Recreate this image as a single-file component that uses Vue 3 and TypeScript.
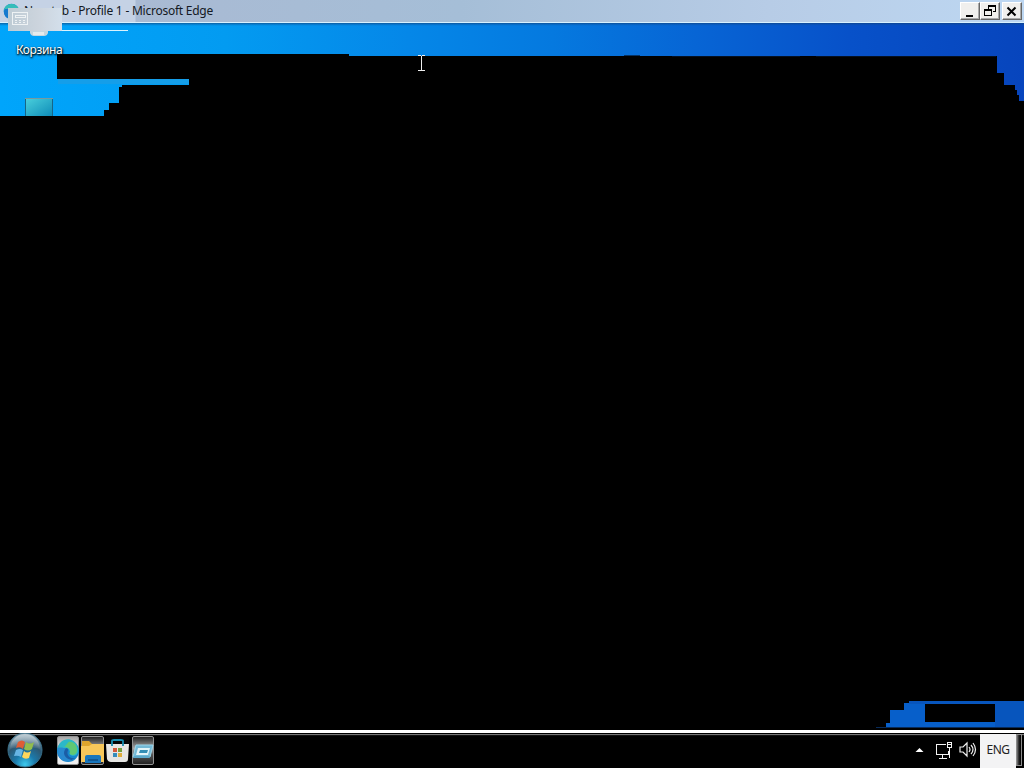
<script setup lang="ts">
import { ref } from 'vue'

const windowTitle = ref('New tab - Profile 1 - Microsoft Edge')
const recycleLabel = ref('Корзина')
const language = ref('ENG')
</script>

<template>
  <div class="screen">
    <header class="titlebar">
      <svg class="edge-mark" width="17" height="17" viewBox="0 0 24 24">
        <circle cx="12" cy="12" r="11" fill="#168bd2" />
        <path d="M1 11C2 0 19-3 23 10c1 7-7 8-9 5 3-5-4-10-13-4z" fill="#35bdb9" />
        <path d="M2 9C-1 20 9 26 19 20c-6 0-10-4-8-10-3-2-7-2-9-1z" fill="#1679ce" />
      </svg>
      <span class="title">{{ windowTitle }}</span>
      <div class="controls">
        <button class="control" aria-label="Minimize">
          <svg width="19" height="18" shape-rendering="crispEdges"><path d="M6 13h7v2H6z" /></svg>
        </button>
        <button class="control" aria-label="Restore">
          <svg width="19" height="18" shape-rendering="crispEdges" fill="none" stroke="#000">
            <path d="M8.500 8V3.500h7v6H13M8 4.500h8M4.500 7.500h7v6h-7zM4 8.500h8" />
          </svg>
        </button>
        <button class="control close" aria-label="Close">
          <svg width="19" height="18"><path d="m5.500 5.500 8 8m0-8-8 8" fill="none" stroke="#000" stroke-width="2" /></svg>
        </button>
      </div>
    </header>

    <main class="desktop">
      <svg class="wallpaper" width="1024" height="707" viewBox="0 23 1024 707">
        <defs>
          <linearGradient id="blue" gradientUnits="userSpaceOnUse" x1="0" y1="70" x2="1024" y2="50">
            <stop offset="0" stop-color="#00a5fb" />
            <stop offset=".22" stop-color="#039bf1" />
            <stop offset=".4" stop-color="#0587e8" />
            <stop offset=".54" stop-color="#0579df" />
            <stop offset=".68" stop-color="#0765d5" />
            <stop offset=".83" stop-color="#0751c9" />
            <stop offset="1" stop-color="#0745bd" />
          </linearGradient>
          <linearGradient id="topShade" x1="0" y1="0" x2="0" y2="1">
            <stop offset="0" stop-color="#123f76" stop-opacity=".65" />
            <stop offset="1" stop-color="#1056a0" stop-opacity="0" />
          </linearGradient>
          <linearGradient id="pc" x1="0" y1="0" x2="1" y2="1">
            <stop stop-color="#49cedb" /><stop offset="1" stop-color="#0e8cb8" />
          </linearGradient>
        </defs>
        <path fill="#000" d="M0 23h1024v707H0z" />
        <path fill="url(#blue)" d="M0 23h1024v78h-5v-6h-2v-5h-2v-5h-11V73h-7V56H349v-2H57v25h132v6h-67v2h-3v16h-10v7h-5v6H0z" />
        <path fill="#159ee9" d="M58 79h131v5H58z" />
        <path fill="#06172f" opacity=".7" d="M624 55h16v1h-16zM672 56h128v1H672zM816 56h180v1H816z" />
        <path fill="url(#topShade)" d="M0 23h1024v3H0z" />
        <path fill="#075fca" d="M876 728v-1h10v-4h4v-13h14v-7h5v-2h115v27z" />
        <path fill="#0755bd" d="M909 701h115v3H909zM995 704h29v24h-29z" />
        <path fill="#082b59" d="M876 727h148v1H876z" />
        <path fill="#000" d="M925 704h70v18h-70z" />
        <path d="M30 30h18v3q-1 3-4 3H34q-3 0-4-3z" fill="#c5d6df" />
        <path d="M33 32h11v3H33z" fill="#e5ebed" />
        <path d="M25 98h28v18H25z" fill="#176586" />
        <path d="M26 99h26v17H26z" fill="url(#pc)" />
        <path d="M25 98.500h28" stroke="#78999f" />
        <path d="M62 30.500h66" stroke="#d9f3ff" />
        <path d="M421.500 56v14M418 70.500h7M418 55.500h3m1 0h3" stroke="#eee" fill="none" shape-rendering="crispEdges" />
      </svg>
      <span class="recycle">{{ recycleLabel }}</span>
    </main>

    <div class="ghost">
      <svg width="54" height="23">
        <g fill="none" stroke="#eef2f4" shape-rendering="crispEdges">
          <path d="M4.500 4.500h15v12h-15zM7 7.500h10v2H7zM7 12.500h2m2 0h2m2 0h2M7 14.500h2m2 0h2m2 0h2" />
        </g>
      </svg>
    </div>

    <footer class="taskbar">
      <button class="start" aria-label="Start">
        <svg width="36" height="35" viewBox="0 0 36 35">
          <defs>
            <radialGradient id="orb" cx=".5" cy=".92" r=".85">
              <stop stop-color="#3cc9ed" /><stop offset=".35" stop-color="#1b7aab" />
              <stop offset=".7" stop-color="#2d5872" /><stop offset="1" stop-color="#7f98a5" />
            </radialGradient>
            <linearGradient id="shine" x1="0" y1="0" x2="0" y2="1">
              <stop stop-color="#dce7ed" stop-opacity=".65" /><stop offset="1" stop-color="#fff" stop-opacity=".05" />
            </linearGradient>
          </defs>
          <circle cx="18" cy="17" r="17" fill="url(#orb)" stroke="#39718c" />
          <path d="M3 16A15 15 0 0 1 33 16Q17 11 3 16z" fill="url(#shine)" />
          <path d="M11 9q4-3 7 0l-2 7q-3-3-7-1z" fill="#df5d35" />
          <path d="M19 9q4 3 8 0l-2 7q-4 3-8 0z" fill="#92bd4d" />
          <path d="M9 17q4-2 7 0l-2 7q-3-2-7-1z" fill="#67b5e4" />
          <path d="M17 18q3 3 7 0l-2 7q-4 2-7-1z" fill="#ffd65b" />
        </svg>
      </button>
      <nav class="apps">
        <button class="app bright" aria-label="Microsoft Edge">
          <svg width="24" height="29" viewBox="0 0 23 29">
            <circle cx="11.500" cy="15" r="11" fill="#1687cd" />
            <path d="M1 14C2 1 17 0 21 10c4 9-5 12-8 8 2-4-4-9-12-4z" fill="#2cb8c8" />
            <path d="M12 6c8-2 12 11 5 13-3 0-4-1-4-2 2-3-1-6-5-6z" fill="#60c873" />
            <path d="M1 12C0 23 8 29 18 23c-6 1-10-4-8-10-3-1-5-2-9-1z" fill="#2889cf" />
            <path d="M10 12c-5 4-2 11 5 12l4-2c-6 1-10-3-7-9z" fill="#1b5ea6" />
          </svg>
        </button>
        <button class="app" aria-label="File Explorer">
          <svg width="24" height="29" viewBox="0 0 24 29">
            <path d="M1 5h7l3 3h12v18H1z" fill="#dea52d" />
            <path d="M0 10h8l3-2h12v18H0z" fill="#f7c75a" />
            <path d="M4 27v-6q0-2 2-2h12q2 0 2 2v6z" fill="#1876bd" /><path d="M7 23h10v2H7z" fill="#105894" />
          </svg>
        </button>
        <button class="app store" aria-label="Microsoft Store">
          <svg width="23" height="29" viewBox="0 0 23 29">
            <path d="M0 8h23l-1 15q0 3-3 3H5q-3 0-4-3z" fill="#e6e6e3" />
            <path d="M6 10V5q0-1 2-1h7q2 0 2 1v5" stroke="#168cae" stroke-width="1.800" fill="none" />
            <path d="M7 12h4v4H7z" fill="#d55a3b" /><path d="M12 12h4v4h-4z" fill="#739f3d" />
            <path d="M7 17h4v4H7z" fill="#358cbb" /><path d="M12 17h4v4h-4z" fill="#dfad3d" />
          </svg>
        </button>
        <button class="app run" aria-label="Run">
          <svg width="22" height="29" viewBox="0 0 22 29">
            <path d="M4 9h17l-3 12H1z" fill="#73b9d6" stroke="#9bd5e9" />
            <path d="M6 12h12l-2 7H4z" fill="#e1f4f9" /><path d="M8 14h8l-1 3H7z" fill="#338eb5" />
            <path d="M2 20h16l-1 2H1z" fill="#5ca9cb" />
          </svg>
        </button>
      </nav>
      <div class="tray">
        <svg class="arrow" width="9" height="6"><path d="M.500 5 4.500 1l4 4z" fill="#fff" /></svg>
        <svg class="network" width="18" height="19" viewBox="0 0 18 19" fill="none" stroke="#f3f3f3" shape-rendering="crispEdges">
          <path d="M11 3.500H1.500v10h12V10M7.500 14v3M4 17.500h8M12.500 1.500h4v5h-4zM13 3.500h3M14.500 7v10" />
        </svg>
        <svg class="volume" width="18" height="18" viewBox="0 0 18 18" fill="none" stroke="#eee" stroke-width="1.200">
          <path d="M1 6h3l4-4v13l-4-4H1zM10 6q2 2.500 0 5M12 4q4 4.500 0 9M14 2q5 6.500 0 13" />
        </svg>
        <span class="language">{{ language }}</span>
        <button class="show-desktop" aria-label="Show desktop"></button>
      </div>
    </footer>
  </div>
</template>

<style>
html, body { margin: 0; overflow: hidden; background: #000; }
</style>

<style scoped>
.screen { position: relative; display: flex; flex-direction: column; width: 1024px; height: 768px; overflow: hidden; background: #000; font-family: "Noto Sans", sans-serif; }
button { padding: 0; border: 0; border-radius: 0; }
svg { display: block; flex: none; }
.titlebar { height: 23px; box-sizing: border-box; display: flex; background: linear-gradient(90deg, #c5d2e5 0 135px, #a9bad3 136px, #a5bed7 45%, #b7cce6 75%, #bdd7f2); border-bottom: 1px solid #d8f1fe; }
.edge-mark { margin: 3px 0 0 3px; }
.title { margin: 2px 0 0 4px; font-size: 12px; line-height: 18px; letter-spacing: -.24px; color: #141923; white-space: nowrap; }
.controls { display: flex; margin: 2px 2px 0 auto; }
.control { box-sizing: border-box; width: 20px; height: 18px; background: #f0efed; border: 1px solid #fff; border-right-color: #676767; border-bottom-color: #676767; box-shadow: inset -1px -1px #aaa; }
.control svg { margin: -1px; }
.close { margin-left: 2px; }
.desktop { position: relative; height: 707px; }
.recycle { position: absolute; left: 16px; top: 18px; font-size: 12px; line-height: 18px; letter-spacing: -.4px; color: #fff; text-shadow: 1px 1px 2px #000, 0 1px 2px #000; }
.ghost { position: absolute; left: 8px; top: 8px; width: 54px; height: 23px; background: linear-gradient(90deg, #bdcbd4, #ccd4dd 55%, #d3dfeb); }
.taskbar { position: relative; box-sizing: border-box; display: flex; height: 38px; border-top: 3px solid #fff; background: linear-gradient(#000 0 1px, #777 1px 2px, #111 2px 3px, #000 3px); }
.start { width: 36px; height: 35px; margin: 0 0 0 7px; background: transparent; }
.apps { display: flex; margin: 3px 0 0 14px; }
.app { box-sizing: border-box; display: flex; align-items: center; justify-content: center; width: 23px; height: 29px; margin-right: 2px; border: 1px solid #939393; border-radius: 2px; background: linear-gradient(#222, #aaa 42%, #555 65%, #222); }
.bright { width: 22px; background: linear-gradient(#a6a6a6, #f0f0f0 50%, #eee); }
.store { border: 0; background: #050505; }
.run { width: 22px; margin-left: 1px; }
.tray { margin-left: auto; display: flex; height: 35px; }
.arrow { margin: 14px 11px 0 0; }
.network { margin: 8px 6px 0 0; }
.volume { margin: 8px 3px 0 0; }
.language { box-sizing: border-box; width: 36px; height: 34px; margin-top: 1px; padding-top: 7px; background: #f3f3f4; color: #222; text-align: center; font-size: 12px; line-height: 18px; letter-spacing: -.5px; }
.show-desktop { box-sizing: border-box; width: 6px; height: 32px; margin: 1px 2px 0 0; border: 1px solid #8c8c8c; background: linear-gradient(90deg, #777, #222 50%, #000); }
</style>
